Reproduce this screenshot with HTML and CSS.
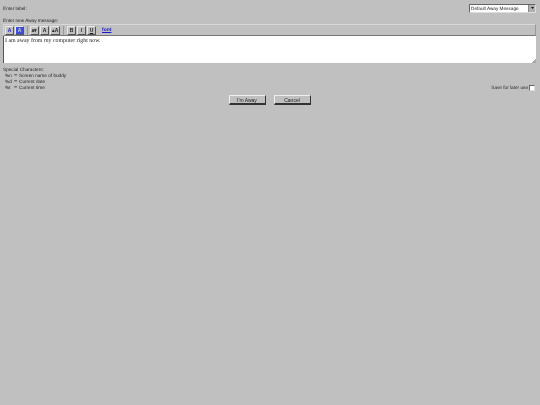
FILE: index.html
```html
<!DOCTYPE html>
<html lang="en">
<head>
  <meta charset="UTF-8">
  <title>New Away Message</title>
  <link rel="stylesheet" href="styles.css">
</head>
<body>
  <div class="label-row">
    <span class="label-text">Enter label:</span>
    <div class="select">
      <span class="select-text">Default Away Message</span>
      <span class="select-arrow"><svg width="3" height="2" viewBox="0 0 3 2"><path d="M0 0h3L1.500 2z" fill="#111"/></svg></span>
    </div>
  </div>

  <div class="message-label">Enter new Away message:</div>

  <div class="toolbar">
    <div class="tool-group">
      <button class="tool tool-color">A</button>
      <button class="tool tool-back">A</button>
    </div>
    <div class="tool-group tool-group-size">
      <button class="tool"><span class="tiny">A</span>&#9662;</button>
      <button class="tool">A</button>
      <button class="tool tool-wide">&#9652;A</button>
    </div>
    <div class="tool-group">
      <button class="tool">B</button>
      <button class="tool tool-i">I</button>
      <button class="tool tool-u">U</button>
    </div>
    <a class="font-link">font</a>
  </div>

  <div class="message">I am away from my computer right now.<span class="grip"></span></div>

  <div class="notes-row">
    <div class="notes">
      <div class="notes-title">Special Characters:</div>
      <div class="note"><span class="code">%n</span><span class="eq">=</span>Screen name of buddy</div>
      <div class="note"><span class="code">%d</span><span class="eq">=</span>Current date</div>
      <div class="note"><span class="code">%t</span><span class="eq">=</span>Current time</div>
    </div>
    <label class="save">Save for later use <span class="checkbox"></span></label>
  </div>

  <div class="actions">
    <button class="action">I'm Away</button>
    <button class="action">Cancel</button>
  </div>
</body>
</html>
```

FILE: styles.css
```css
html, body {
  height: 100%;
}

body {
  margin: 0;
  padding: 3px 4px 0 3px;
  box-sizing: border-box;
  background-color: #c0c0c0;
  font-family: "Liberation Sans", Arial, sans-serif;
  font-size: 4.700px;
  line-height: 6px;
  color: #222;
  text-rendering: geometricPrecision;
  filter: blur(0.3px);
}

.label-row {
  display: flex;
  justify-content: space-between;
  align-items: center;
  height: 10px;
}

.label-text {
  padding-top: 1px;
}

.select {
  display: flex;
  justify-content: space-between;
  width: 67px;
  height: 9px;
  box-sizing: border-box;
  background-color: #fff;
  border: 1px solid #666;
  border-right-color: #ddd;
  border-bottom-color: #ddd;
}

.select-text {
  padding-left: 1px;
  line-height: 7px;
}

.select-arrow {
  display: flex;
  align-items: center;
  justify-content: center;
  width: 6px;
  background-color: #b0b0b0;
  border-left: 1px solid #888;
}

.message-label {
  margin-top: 4px;
  height: 7px;
  line-height: 7px;
}

.toolbar {
  display: flex;
  align-items: center;
  gap: 3px;
  height: 12px;
  box-sizing: border-box;
  padding-left: 1px;
  border: 1px solid #d8d8d8;
  border-right-color: #999;
  border-bottom: 1px solid #777;
}

.tool-group {
  display: flex;
  gap: 1px;
  padding-left: 3px;
  border-left: 1px solid #999;
}

.tool-group:first-child {
  padding-left: 0;
  border-left: 0;
}

.tool-group-size {
  padding-left: 2px;
}

.tool {
  width: 9px;
  height: 9px;
  padding: 0;
  box-sizing: border-box;
  background-color: #c0c0c0;
  border: 1px solid #e8e8e8;
  border-right-color: #555;
  border-bottom-color: #555;
  font-family: "Liberation Sans", Arial, sans-serif;
  font-size: 5px;
  font-weight: bold;
  line-height: 6px;
  color: #222;
}

.tool-wide {
  width: 10px;
}

.tiny {
  font-size: 4px;
}

.tool-color {
  color: #1a1acc;
}

.tool-back {
  background-color: #3f4fd4;
  color: #d0d4f0;
}

.tool-i {
  font-style: italic;
}

.tool-u {
  text-decoration: underline;
}

.font-link {
  margin-left: 3px;
  font-size: 5px;
  font-weight: bold;
  color: #1a1acc;
  text-decoration: underline;
}

.message {
  position: relative;
  height: 27px;
  box-sizing: border-box;
  padding: 2px 1px 0;
  background-color: #fff;
  border-left: 1px solid #555;
  font-family: "Liberation Serif", "Times New Roman", serif;
  font-size: 5.900px;
  line-height: 7px;
  color: #222;
}

.grip {
  position: absolute;
  right: 0;
  bottom: 0;
  width: 4px;
  height: 4px;
  background: linear-gradient(135deg, transparent 50%, #aaa 50%);
}

.notes-row {
  display: flex;
  justify-content: space-between;
  align-items: flex-end;
  margin-top: 4px;
}

.notes-title,
.note {
  height: 6px;
}

.note {
  display: flex;
  padding-left: 2px;
}

.code {
  width: 9px;
}

.eq {
  width: 5px;
  font-size: 5.500px;
}

.save {
  display: flex;
  align-items: center;
  gap: 1px;
  margin-right: 1px;
}

.checkbox {
  width: 6px;
  height: 6px;
  box-sizing: border-box;
  background-color: #fff;
  border: 1px solid #666;
  border-right-color: #ddd;
  border-bottom-color: #ddd;
}

.actions {
  display: flex;
  justify-content: center;
  gap: 8px;
  margin-top: 4px;
}

.action {
  width: 37px;
  height: 10px;
  padding: 0;
  box-sizing: border-box;
  background-color: #c0c0c0;
  border: 1px solid #eee;
  border-right-color: #333;
  border-bottom: 2px solid #333;
  font-family: "Liberation Sans", Arial, sans-serif;
  font-size: 5px;
  line-height: 6px;
  color: #222;
}
```
